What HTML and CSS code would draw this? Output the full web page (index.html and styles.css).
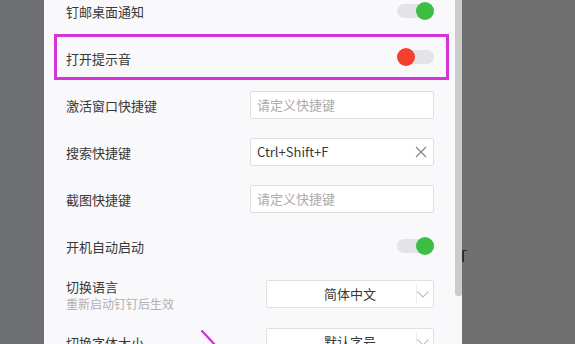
FILE: index.html
```html
<!DOCTYPE html>
<html lang="zh">
<head>
<meta charset="utf-8">
<link rel="stylesheet" href="styles.css">
</head>
<body>
<div class="side"></div>
<div class="panel">
  <div class="list">
    <div class="row">
      <span class="label">钉邮桌面通知</span>
      <span class="toggle on"><span class="knob"></span></span>
    </div>
    <div class="row hl">
      <span class="label">打开提示音</span>
      <span class="toggle off"><span class="knob"></span></span>
    </div>
    <div class="row">
      <span class="label">激活窗口快捷键</span>
      <div class="input placeholder">请定义快捷键</div>
    </div>
    <div class="row">
      <span class="label">搜索快捷键</span>
      <div class="input">Ctrl+Shift+F
        <svg class="clear" width="12" height="12" viewBox="0 0 12 12"><path d="M1 1L11 11M11 1L1 11" stroke="#8a8a8a" stroke-width="1.3" fill="none"/></svg>
      </div>
    </div>
    <div class="row">
      <span class="label">截图快捷键</span>
      <div class="input placeholder">请定义快捷键</div>
    </div>
    <div class="row">
      <span class="label">开机自动启动</span>
      <span class="toggle on"><span class="knob"></span></span>
    </div>
    <div class="row lang">
      <div class="label-group">
        <div class="label">切换语言</div>
        <div class="sub">重新启动钉钉后生效</div>
      </div>
      <div class="select">简体中文
        <span class="divider"></span>
        <svg class="chev" width="12" height="7" viewBox="0 0 12 7"><path d="M0.5 0.5L6 6L11.5 0.5" stroke="#bdbdbd" stroke-width="1.1" fill="none"/></svg>
      </div>
    </div>
    <div class="row">
      <span class="label">切换字体大小</span>
      <div class="select">默认字号
        <span class="divider"></span>
        <svg class="chev" width="12" height="7" viewBox="0 0 12 7"><path d="M0.5 0.5L6 6L11.5 0.5" stroke="#bdbdbd" stroke-width="1.1" fill="none"/></svg>
      </div>
    </div>
  </div>
</div>
<div class="scroll"><div class="thumb"></div></div>
<div class="rest"><span class="frag"></span></div>
<svg class="arrow" width="24" height="24" viewBox="0 0 24 24"><path d="M4 5L18 20" stroke="#cf2fd2" stroke-width="2.2" stroke-linecap="round"/></svg>
</body>
</html>
```
FILE: styles.css
```css
* { box-sizing: border-box; }
html, body { margin: 0; padding: 0; }
body {
  width: 575px;
  height: 344px;
  overflow: hidden;
  display: flex;
  background: #6f6f6f;
  font-family: "Noto Sans CJK SC", "Noto Sans", sans-serif;
  font-size: 13px;
  color: #383838;
  position: relative;
}
.side { width: 44px; background: #6e6f71; flex: none; }
.panel {
  width: 411px;
  flex: none;
  background: #f9f9fb;
  padding: 0 21px 0 22px;
  overflow: hidden;
}
.list { margin-top: -13px; display: flex; flex-direction: column; }
.row {
  height: 47px;
  display: flex;
  align-items: center;
  justify-content: space-between;
  flex: none;
}
.label { line-height: 17px; padding-top: 2px; }
.row.hl {
  height: 46px;
  margin: 0 -15px 1px -12px;
  padding: 0 12px 0 9px;
  border: 3px solid #d335d6;
}
.toggle {
  position: relative;
  width: 37px;
  height: 18px;
  flex: none;
}
.toggle::before {
  content: "";
  position: absolute;
  left: 0; right: 0; top: 2px;
  height: 14px;
  border-radius: 7px;
  background: #e4e4e6;
}
.knob {
  position: absolute;
  top: 0;
  width: 18px;
  height: 18px;
  border-radius: 50%;
}
.on .knob { right: 0; background: #3dbd43; }
.off .knob { left: 0; background: #f4402f; }
.input {
  width: 184px;
  height: 28px;
  background: #fff;
  border: 1px solid #dfdfe1;
  border-radius: 2px;
  padding: 0 6px;
  display: flex;
  align-items: center;
  justify-content: space-between;
  line-height: 17px;
}
.input.placeholder { color: #ababab; }
.row.lang { height: 49px; }
.label-group { padding-top: 2px; }
.label-group .label { padding-top: 0; }
.sub { font-size: 12px; color: #b0b0b0; line-height: 17px; }
.select {
  width: 168px;
  height: 28px;
  background: #fff;
  border: 1px solid #dfdfe1;
  border-radius: 2px;
  display: flex;
  align-items: center;
  justify-content: center;
  position: relative;
  line-height: 17px;
}
.divider {
  position: absolute;
  left: 149px;
  top: 3px;
  bottom: 3px;
  width: 1px;
  background: #eeeeee;
}
.chev { position: absolute; right: 4px; top: 10px; }
.scroll { width: 7px; flex: none; background: #f7f7f9; }
.thumb { height: 296px; background: #cbcbcb; border-radius: 0 0 3px 3px; }
.rest { flex: 1; padding-top: 250px; }
.frag {
  display: block;
  width: 5px;
  height: 12px;
  border-left: 2px solid #2e2e2e;
  border-top: 1px solid #2e2e2e;
}
.arrow { position: absolute; left: 198px; top: 326px; }
```
